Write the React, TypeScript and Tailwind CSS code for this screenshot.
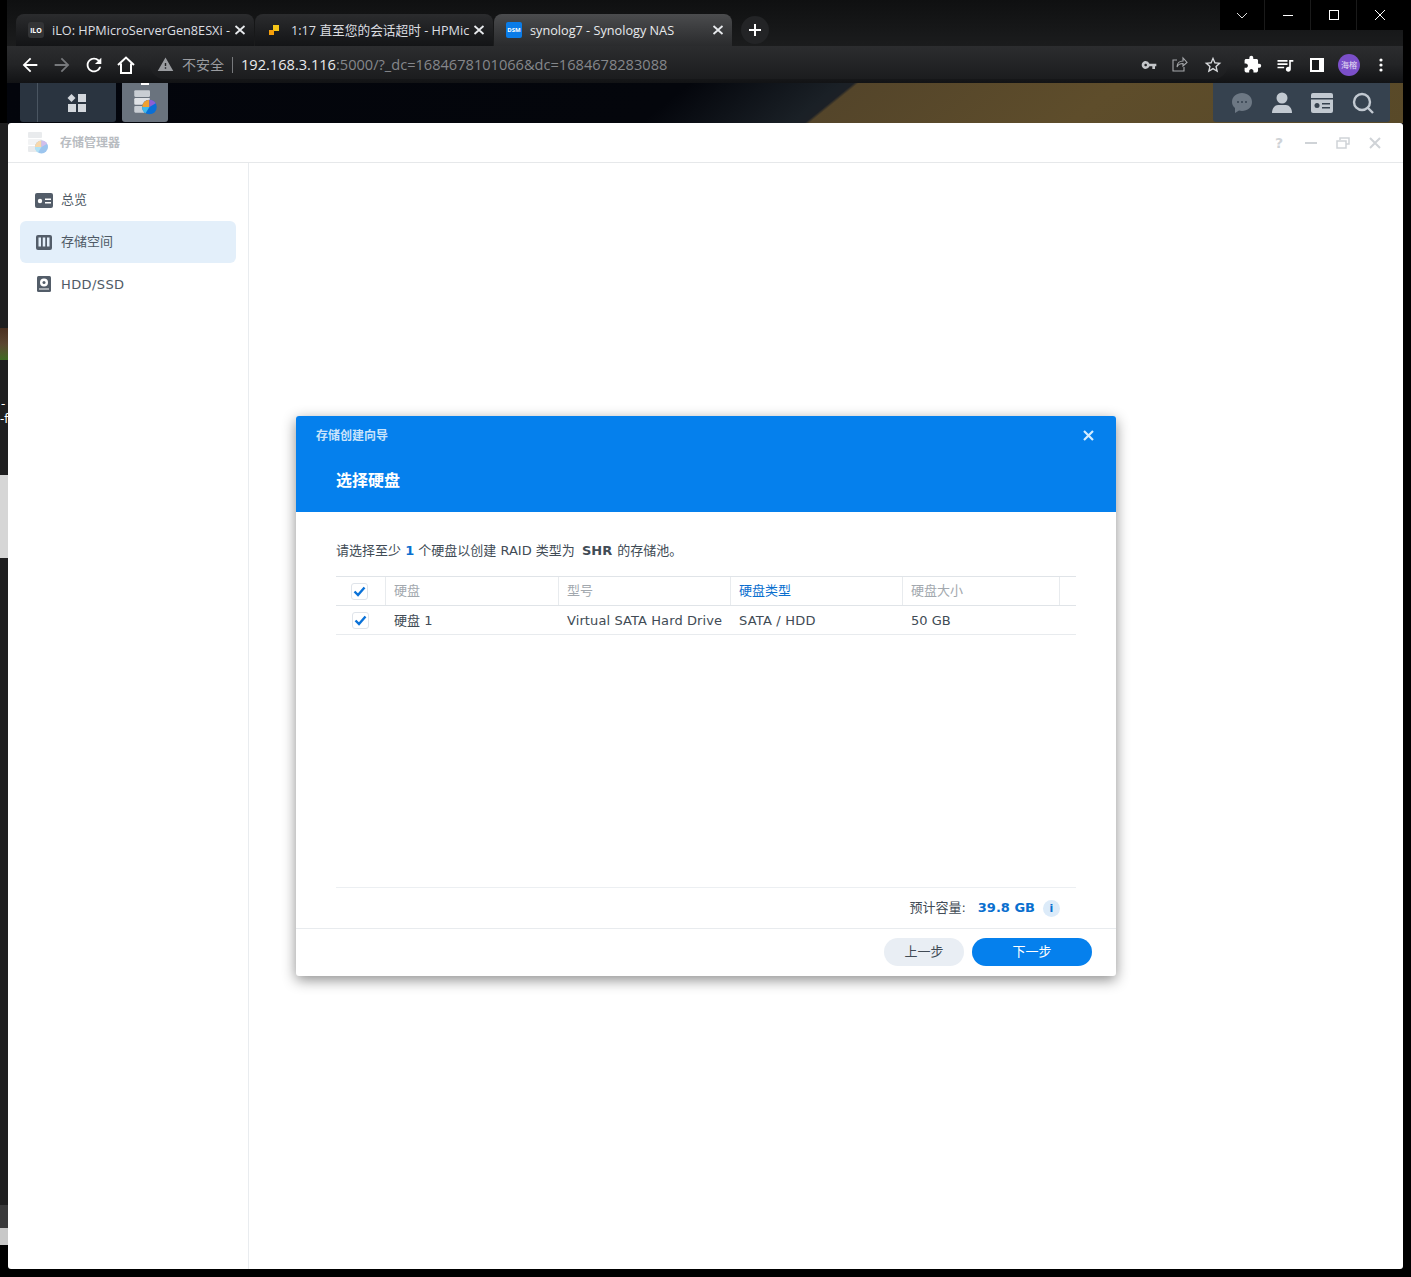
import React from "react";
import {
  MdArrowBack,
  MdArrowForward,
  MdRefresh,
  MdWarning,
  MdVpnKey,
  MdExtension,
  MdStarBorder,
  MdQueueMusic,
} from "react-icons/md";

const ui = "font-['DejaVu_Sans','Noto_Sans_CJK_SC',sans-serif]";
const chromeFont = "font-['Open_Sans','Noto_Sans_CJK_SC',sans-serif]";

function StorageIcon({ size = 24, faded = false }: { size?: number; faded?: boolean }) {
  return (
    <svg width={size} height={size} viewBox="0 0 24 24" className={faded ? "opacity-40" : ""}>
      <rect x="2" y="1" width="14" height="6" rx="1" fill="#c9ced4" />
      <rect x="2" y="8" width="14" height="6" rx="1" fill="#dfe2e6" />
      <rect x="2" y="15" width="14" height="6" rx="1" fill="#c9ced4" />
      <circle cx="15.5" cy="16" r="6.5" fill="#0a6fd6" />
      <path d="M15.5 16V9.5a6.5 6.5 0 0 0-6.5 6.5z" fill="#f0a030" />
      <path d="M15.5 16H9a6.5 6.5 0 0 0 3 5.500z" fill="#3fb8e8" />
      <path d="M15.5 16V9.5a6.5 6.5 0 0 1 5.6 3.2z" fill="#8d5fd3" />
    </svg>
  );
}

function Tab({
  icon,
  title,
  active = false,
}: {
  icon: React.ReactNode;
  title: string;
  active?: boolean;
}) {
  return (
    <div
      className={`flex h-[32px] w-[238px] items-center rounded-t-lg pl-[12px] pr-[7px] text-[12.7px] ${
        active
          ? "bg-gradient-to-b from-[#4b4c4e] to-[#2a2b2d] text-[#e8eaed]"
          : "bg-gradient-to-b from-[#2b2c2e] to-[#131416] text-[#dcdee1]"
      }`}
    >
      <span className="flex w-[24px] shrink-0 items-center">{icon}</span>
      <span className="min-w-0 flex-1 whitespace-nowrap pt-[1px]">{title}</span>
      <svg width="14" height="10" viewBox="0 0 14 10" stroke="#e8eaed" strokeWidth="1.8" className="shrink-0">
        <path d="M2.500 1l9 8M11.500 1l-9 8" />
      </svg>
    </div>
  );
}

function ChromeBar() {
  return (
    <div className={`ml-[7px] mr-[8px] ${chromeFont}`}>
      <div className="flex h-[46px] bg-gradient-to-b from-[#0f1011] to-[#1b1c1d]">
        <div className="flex items-end pl-[9px]">
          <Tab
            title="iLO: HPMicroServerGen8ESXi -"
            icon={
              <span className="flex h-[16px] w-[16px] items-center justify-center rounded-[3px] bg-[#333436] text-[7px] font-bold leading-none text-white">
                iLO
              </span>
            }
          />
          <div className="w-px" />
          <Tab
            title="1:17 直至您的会话超时 - HPMic"
            icon={
              <svg width="14" height="14" viewBox="0 0 14 14">
                <rect x="6" y="2" width="6" height="6" fill="#f5c518" />
                <rect x="2" y="7" width="5" height="5" fill="#f59e0b" />
              </svg>
            }
          />
          <div className="w-px" />
          <Tab
            active
            title="synolog7 - Synology NAS"
            icon={
              <span className="flex h-[16px] w-[16px] items-center justify-center rounded-[2px] bg-[#0a7ce8] text-[6px] font-bold text-white">
                DSM
              </span>
            }
          />
          <div className="flex h-[32px] w-[46px] items-center justify-center">
            <span className="flex h-[28px] w-[28px] items-center justify-center rounded-full bg-[#232426]">
              <svg width="14" height="14" viewBox="0 0 14 14" stroke="#fff" strokeWidth="2">
                <path d="M7 1v12M1 7h12" />
              </svg>
            </span>
          </div>
        </div>
        <div className="flex-1" />
        <div className="flex h-[30px] w-[183px] bg-black text-white">
          <div className="flex w-[45px] items-center justify-center border-r border-[#1a1a1a]">
            <svg width="12" height="7" viewBox="0 0 12 7" fill="none" stroke="#ddd">
              <path d="M1 1l5 5 5-5" />
            </svg>
          </div>
          <div className="flex w-[46px] items-center justify-center border-r border-[#1a1a1a]">
            <div className="h-px w-[10px] bg-white" />
          </div>
          <div className="flex w-[46px] items-center justify-center border-r border-[#1a1a1a]">
            <div className="h-[10px] w-[10px] border border-white" />
          </div>
          <div className="flex w-[46px] items-center justify-center">
            <svg width="12" height="12" viewBox="0 0 12 12" stroke="#fff">
              <path d="M1 1l10 10M11 1L1 11" />
            </svg>
          </div>
        </div>
      </div>
      <div className="flex h-[37px] items-center bg-gradient-to-b from-[#2c2d2f] via-[#232426] to-[#121315] text-white">
        <div className="flex w-[143px] items-center pl-[12px]">
          <MdArrowBack size={22} className="mr-[10px]" />
          <MdArrowForward size={22} className="mr-[10px] text-[#77797c]" />
          <MdRefresh size={22} className="mr-[11px]" />
          <svg width="20" height="20" viewBox="0 0 20 20" fill="none" stroke="#fff" strokeWidth="2">
            <path d="M2 10l8-7.500 8 7.500M5 8.500V18h10V8.500" />
          </svg>
        </div>
        <div className="flex h-[29px] w-[1078px] items-center rounded-full bg-gradient-to-b from-[#2a2b2d] to-[#1b1c1e] pl-[7px] pr-[5px]">
          <MdWarning size={17} className="mr-[8px] text-[#9a9ca0]" />
          <span className="text-[14px] text-[#9a9ca0]">不安全</span>
          <span className="mx-[8px] h-[16px] w-px bg-[#77797c]" />
          <span className="whitespace-nowrap text-[14.6px] text-[#e8eaed]">
            192.168.3.116<span className="text-[#85878b]">:5000/?_dc=1684678101066&amp;dc=1684678283088</span>
          </span>
          <div className="flex-1" />
          <MdVpnKey size={16} className="mr-[14px] text-[#c4c6c9]" />
          <svg width="17" height="17" viewBox="0 0 17 17" fill="none" stroke="#a6a8ab" strokeWidth="1.1" className="mr-[15px]">
            <path d="M6 4H2v11h11v-4M6 11c0-4 3-6 6-6V2l4 4.500L12 10V7.500c-3 0-5 1-6 3.500z" />
          </svg>
          <MdStarBorder size={20} className="text-[#d8dadd]" />
        </div>
        <div className="flex flex-1 items-center pl-[15px]">
          <MdExtension size={19} className="mr-[13px]" />
          <MdQueueMusic size={20} className="mr-[15px]" />
          <div className="mr-[14px] flex h-[14px] w-[14px] items-center justify-start border-[2px] border-white bg-white">
            <div className="h-full w-[7px] bg-[#1a1b1d]" />
          </div>
          <div className="mr-[19px] flex h-[22px] w-[22px] items-center justify-center rounded-full bg-[#7b4fc9] text-[8px] text-[#e8e0f5]">
            海榕
          </div>
          <svg width="4" height="14" viewBox="0 0 4 14" fill="#fff">
            <circle cx="2" cy="2" r="1.6" />
            <circle cx="2" cy="7" r="1.6" />
            <circle cx="2" cy="12" r="1.6" />
          </svg>
        </div>
      </div>
    </div>
  );
}

function DesktopStrip() {
  return (
    <div className="ml-[7px] mr-[8px] flex h-[40px] bg-[linear-gradient(141deg,#03050c_0px,#04060c_430px,#1a2026_525px,#1c2026_533px,#54452a_536px,#5e4d2b_700px,#584928_911px)]">
      <div className="ml-[13px] flex h-[39px] w-[96px] rounded-b-[3px] bg-[#2a3440]">
        <div className="w-[18px] border-r border-[#4a5561]" />
        <div className="flex flex-1 items-center justify-center pr-[1px]">
          <svg width="20" height="18" viewBox="0 0 20 18" fill="#d3d7dc">
            <path d="M4.500 0l4 4-4 4-4-4z" />
            <rect x="11" y="0" width="8" height="8" />
            <rect x="1" y="10" width="8" height="8" />
            <rect x="11" y="10" width="8" height="8" />
          </svg>
        </div>
      </div>
      <div className="relative ml-[6px] flex h-[39px] w-[46px] items-center justify-center rounded-b-[3px] bg-[#6a737e]">
        <span className="absolute left-[19px] top-0 h-[2px] w-[8px] bg-white" />
        <StorageIcon size={27} />
      </div>
      <div className="flex-1" />
      <div className="mr-[13px] flex h-[39px] w-[177px] items-center rounded-b-[3px] bg-[#36424f] pl-[9px]">
        <div className="flex w-[40px] justify-center">
          <svg width="22" height="22" viewBox="0 0 22 22">
            <path d="M11 1c5.500 0 10 3.600 10 9s-4.500 9-10 9c-1 0-2-.1-3-.4L4 21v-5C2 14.400 1 12.400 1 10 1 4.600 5.500 1 11 1z" fill="#6d7884" />
            <circle cx="7" cy="10" r="1" fill="#36424f" />
            <circle cx="11" cy="10" r="1" fill="#36424f" />
            <circle cx="15" cy="10" r="1" fill="#36424f" />
          </svg>
        </div>
        <div className="flex w-[40px] justify-center">
          <svg width="22" height="22" viewBox="0 0 22 22" fill="#c2c9d1">
            <circle cx="11" cy="6" r="5.500" />
            <path d="M1 21c0-5 3-8 6-8h8c3 0 6 3 6 8z" />
          </svg>
        </div>
        <div className="flex w-[40px] justify-center">
          <svg width="22" height="20" viewBox="0 0 22 20">
            <rect width="22" height="20" rx="2" fill="#c2c9d1" />
            <rect x="0" y="5" width="22" height="1.500" fill="#36424f" />
            <circle cx="6" cy="12.500" r="2.500" fill="#36424f" />
            <rect x="11" y="10" width="8" height="1.500" fill="#36424f" />
            <rect x="11" y="14" width="8" height="1.500" fill="#36424f" />
          </svg>
        </div>
        <div className="flex w-[40px] justify-center pl-[1px]">
          <svg width="22" height="22" viewBox="0 0 22 22" fill="none" stroke="#c2c9d1" strokeWidth="2.400">
            <circle cx="10" cy="10" r="8" />
            <path d="M16 16l5 5" />
          </svg>
        </div>
      </div>
    </div>
  );
}

function SideItem({
  icon,
  label,
  active = false,
}: {
  icon: React.ReactNode;
  label: React.ReactNode;
  active?: boolean;
}) {
  return (
    <div
      className={`flex h-[42px] items-center rounded-[6px] pl-[15px] text-[13px] text-[#4f5a66] ${
        active ? "bg-[#e3effa]" : ""
      }`}
    >
      <span className="mr-[8px] flex w-[18px] justify-center">{icon}</span>
      {label}
    </div>
  );
}

function Check() {
  return (
    <span className="flex h-[17px] w-[17px] items-center justify-center rounded-[3px] border border-[#dfe4ea] bg-white">
      <svg width="13" height="11" viewBox="0 0 13 11" fill="none" stroke="#0a72d8" strokeWidth="2.400">
        <path d="M1.500 5.500l3.500 3.500 6.500-7.500" />
      </svg>
    </span>
  );
}

function Wizard() {
  return (
    <div className="absolute left-[288px] top-[293px] flex h-[560px] w-[820px] flex-col overflow-hidden rounded-[3px] bg-white shadow-[0_4px_14px_rgba(0,0,0,0.45)]">
      <div className="h-[96px] bg-[#0580ed] text-white">
        <div className="flex h-[39px] items-center justify-between pl-[20px] pr-[22px]">
          <span className="text-[12px] font-bold text-[#c9e4fb]">存储创建向导</span>
          <svg width="11" height="11" viewBox="0 0 11 11" stroke="#d4ecff" strokeWidth="2.200">
            <path d="M1 1l9 9M10 1l-9 9" />
          </svg>
        </div>
        <div className="pl-[40px] pt-[14px] text-[16px] font-bold leading-[24px]">选择硬盘</div>
      </div>
      <div className="flex flex-1 flex-col px-[40px]">
        <p className="pt-[29px] text-[13px] leading-[19px] text-[#414b55]">
          请选择至少 <b className="text-[#0a6fcf]">1</b> 个硬盘以创建 RAID 类型为{" "}
          <b className="ml-[3px] mr-[1px]">SHR</b> 的存储池。
        </p>
        <div className="mt-[16px] text-[13px]">
          <div className="flex h-[30px] items-center border-y border-[#e0e4e8] text-[#a2a8ae]">
            <div className="flex h-full w-[50px] items-center border-r border-[#e8ebee] pl-[15px]">
              <Check />
            </div>
            <div className="flex h-full w-[173px] items-center border-r border-[#e8ebee] pl-[8px]">硬盘</div>
            <div className="flex h-full w-[172px] items-center border-r border-[#e8ebee] pl-[8px]">型号</div>
            <div className="flex h-full w-[172px] items-center border-r border-[#e8ebee] pl-[8px] text-[#0a6fcf]">
              硬盘类型
            </div>
            <div className="flex h-full w-[157px] items-center border-r border-[#e8ebee] pl-[8px]">硬盘大小</div>
          </div>
          <div className="flex h-[29px] items-center border-b border-[#e8ebee] pt-[1px] text-[#414b55]">
            <div className="w-[50px] pl-[16px]">
              <Check />
            </div>
            <div className="w-[173px] pl-[8px]">硬盘 1</div>
            <div className="w-[172px] whitespace-nowrap pl-[8px] tracking-[0.1px]">Virtual SATA Hard Drive</div>
            <div className="w-[172px] pl-[8px] tracking-[0.2px]">SATA / HDD</div>
            <div className="w-[157px] pl-[8px]">50 GB</div>
          </div>
        </div>
        <div className="flex-1" />
        <div className="flex h-[41px] items-center justify-end border-t border-[#eceff2] pr-[16px] text-[13px] text-[#414b55]">
          预计容量:
          <b className="ml-[12px] text-[#0a6fcf]">39.8 GB</b>
          <span className="ml-[8px] flex h-[17px] w-[17px] items-center justify-center rounded-full bg-[#dcebf9] text-[11px] font-bold leading-none text-[#0a6fcf]">
            i
          </span>
        </div>
      </div>
      <div className="flex h-[48px] items-center justify-end border-t border-[#e8ebee] pb-[2px] pr-[24px] text-[13px]">
        <button className="mr-[8px] h-[28px] w-[80px] rounded-full bg-[#e9eef4] text-[#414b55]">上一步</button>
        <button className="h-[28px] w-[120px] rounded-full bg-[#0580ed] text-white">下一步</button>
      </div>
    </div>
  );
}

function StorageWindow() {
  return (
    <div className={`relative flex h-[1146px] w-[1395px] flex-col overflow-hidden rounded-[3px] bg-white ${ui}`}>
      <div className="flex h-[40px] shrink-0 items-center border-b border-[#e6e8ea] pl-[18px] pr-[21px]">
        <StorageIcon size={24} faded />
        <span className="ml-[10px] text-[12px] font-bold text-[#b8bcc1]">存储管理器</span>
        <div className="flex-1" />
        <div className="flex items-center gap-[18px] text-[#cfd3d7]">
          <span className="w-[14px] text-center text-[14px] font-bold leading-none">?</span>
          <span className="flex w-[14px] justify-center">
            <span className="h-[2px] w-[12px] bg-[#cfd3d7]" />
          </span>
          <svg width="14" height="12" viewBox="0 0 14 12" fill="none" stroke="#cfd3d7" strokeWidth="1.500">
            <path d="M4 3V1h9v6h-3M1 4h9v7H1z" />
          </svg>
          <span className="flex w-[14px] justify-center">
            <svg width="12" height="12" viewBox="0 0 12 12" stroke="#cfd3d7" strokeWidth="2">
              <path d="M1 1l10 10M11 1L1 11" />
            </svg>
          </span>
        </div>
      </div>
      <div className="flex flex-1">
        <div className="w-[241px] shrink-0 border-r border-[#e9ecef] px-[12px] pt-[16px]">
          <SideItem
            label="总览"
            icon={
              <svg width="18" height="15" viewBox="0 0 18 15">
                <rect width="18" height="15" rx="2" fill="#535d69" />
                <circle cx="5" cy="8" r="2.200" fill="#fff" />
                <rect x="10" y="5.500" width="6" height="1.500" fill="#fff" />
                <rect x="10" y="9" width="6" height="1.500" fill="#fff" />
              </svg>
            }
          />
          <SideItem
            active
            label="存储空间"
            icon={
              <svg width="16" height="15" viewBox="0 0 16 15">
                <rect width="16" height="15" rx="2" fill="#535d69" />
                <rect x="2.500" y="2.500" width="2.500" height="9" fill="#e3effa" />
                <rect x="6.750" y="2.500" width="2.500" height="9" fill="#e3effa" />
                <rect x="11" y="2.500" width="2.500" height="9" fill="#e3effa" />
              </svg>
            }
          />
          <SideItem
            label={<span className="pt-[1px] tracking-[0.4px]">HDD/SSD</span>}
            icon={
              <svg width="14" height="16" viewBox="0 0 14 16">
                <rect width="14" height="16" rx="1.500" fill="#535d69" />
                <circle cx="7" cy="6.500" r="4" fill="#fff" />
                <circle cx="7" cy="6.500" r="1.500" fill="#535d69" />
                <rect x="2" y="12.500" width="10" height="1" fill="#fff" />
              </svg>
            }
          />
        </div>
        <div className="flex-1" />
      </div>
      <Wizard />
    </div>
  );
}

// what shows of the desktop behind the window, left of it
function DesktopSliver() {
  return (
    <div className="flex h-[1146px] w-[8px] shrink-0 flex-col overflow-hidden bg-[#1f1f20] font-['DejaVu_Sans',sans-serif] text-[12px] leading-none text-white">
      <div className="mt-[205px] h-[32px] bg-gradient-to-b from-[#4a3020] via-[#5a4530] to-[#3d6a20]" />
      <div className="mt-[38px] h-[15px] whitespace-nowrap pl-[1px]">-</div>
      <div className="h-[16px] whitespace-nowrap">-f</div>
      <div className="mt-[46px] h-[83px] bg-[#d6d6d6]" />
      <div className="mt-[647px] h-[23px] bg-[#3a3a3b]" />
      <div className="h-[17px] bg-[#c8c8c8]" />
      <div className="flex-1 bg-black" />
    </div>
  );
}

export default function App() {
  return (
    <div className="h-[1277px] w-[1411px] overflow-hidden bg-black">
      <ChromeBar />
      <DesktopStrip />
      <div className="flex">
        <DesktopSliver />
        <StorageWindow />
      </div>
    </div>
  );
}
